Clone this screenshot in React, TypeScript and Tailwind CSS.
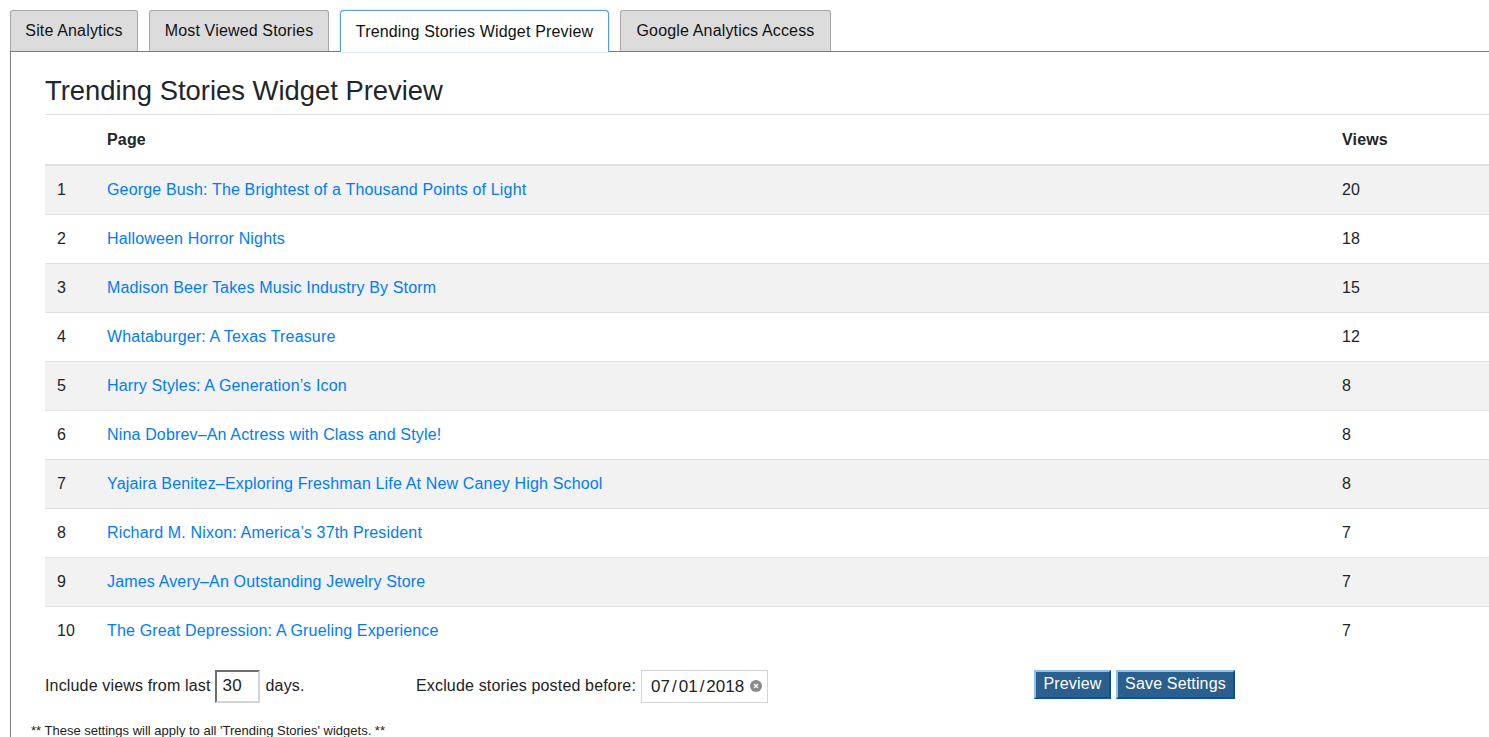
import React from "react";

const rows: [number, string, number][] = [
  [1, "George Bush: The Brightest of a Thousand Points of Light", 20],
  [2, "Halloween Horror Nights", 18],
  [3, "Madison Beer Takes Music Industry By Storm", 15],
  [4, "Whataburger: A Texas Treasure", 12],
  [5, "Harry Styles: A Generation\u2019s Icon", 8],
  [6, "Nina Dobrev\u2013An Actress with Class and Style!", 8],
  [7, "Yajaira Benitez\u2013Exploring Freshman Life At New Caney High School", 8],
  [8, "Richard M. Nixon: America\u2019s 37th President", 7],
  [9, "James Avery\u2013An Outstanding Jewelry Store", 7],
  [10, "The Great Depression: A Grueling Experience", 7],
];

function Tab({ label, active, w }: { label: string; active?: boolean; w: string }) {
  if (active) {
    return (
      <div className={`-mb-px h-[42px] ${w} flex items-center justify-center bg-white border border-b-0 border-[#5a9bd8] rounded-t-[4px] shadow-[0_0_2px_rgba(90,155,216,0.6)] text-[16px] text-[#111] whitespace-nowrap`}>
        {label}
      </div>
    );
  }
  return (
    <div className={`h-[41px] ${w} flex items-center justify-center bg-[#dcdcdc] border border-b-0 border-[#a6a6a6] rounded-t-[3px] text-[16px] text-[#111] whitespace-nowrap`}>
      {label}
    </div>
  );
}

export default function App() {
  return (
    <div className="font-['Liberation_Sans',Arial,sans-serif] tracking-[0.16px] text-[#212529] bg-white w-[1489px] h-[737px] overflow-hidden">
      <div className="pt-[10px] pl-[10px]">
        <div className="flex items-end gap-[11px] border-b border-[#7a7a7a]">
          <Tab label="Site Analytics" w="w-[128px]" />
          <Tab label="Most Viewed Stories" w="w-[180px]" />
          <Tab label="Trending Stories Widget Preview" active w="w-[269px]" />
          <Tab label="Google Analytics Access" w="w-[211px]" />
        </div>
        <div className="border-l border-[#7a7a7a] pl-[34px] pt-[23px]">
          <h3 className="text-[27.4px] tracking-normal leading-[1.2] font-normal mb-[6px] text-[#212529]">
            Trending Stories Widget Preview
          </h3>
          <table className="w-[1444px] border-collapse text-[16px] leading-[24px]">
            <colgroup>
              <col className="w-[50px]" />
              <col />
              <col className="w-[159px]" />
            </colgroup>
            <thead>
              <tr className="border-t border-[#dee2e6] border-b-2">
                <th className="pt-[13px] pb-[12px] px-[12px] text-left font-bold"></th>
                <th className="pt-[13px] pb-[12px] px-[12px] text-left font-bold">Page</th>
                <th className="pt-[13px] pb-[12px] px-[12px] text-left font-bold">Views</th>
              </tr>
            </thead>
            <tbody>
              {rows.map(([n, title, v]) => (
                <tr
                  key={n}
                  className={`border-t border-[#dee2e6] ${n % 2 === 1 ? "bg-[#f2f2f2]" : "bg-white"}`}
                >
                  <td className="p-[12px]">{n}</td>
                  <td className="p-[12px] text-[#007bff]">{title}</td>
                  <td className="p-[12px]">{v}</td>
                </tr>
              ))}
            </tbody>
          </table>
          <div className="flex items-center mt-[15px] text-[16px] text-[#222] whitespace-nowrap">
            <div className="w-[371px] flex items-center">
              <span>Include views from last</span>
              <div className="ml-[4px] w-[45px] h-[33px] border-2 border-t-[#6e6e6e] border-l-[#6e6e6e] border-r-[#d4d4d4] border-b-[#d4d4d4] flex items-end pb-[2px] pl-[6px] text-[17px]">
                30
              </div>
              <span className="ml-[6px]">days.</span>
            </div>
            <div className="w-[618px] flex items-center">
              <span>Exclude stories posted before:</span>
              <div className="ml-[5px] w-[127px] h-[33px] border border-[#d5d5d5] flex items-center pl-[9px] text-[17px] text-[#222] tracking-normal">
                <span>07</span>
                <span className="mx-[2px]">/</span>
                <span>01</span>
                <span className="mx-[2px]">/</span>
                <span>2018</span>
                <span className="ml-[6px] w-[12px] h-[12px] rounded-full bg-[#8a8a8a] flex items-center justify-center">
                  <svg width="6" height="6" viewBox="0 0 6 6">
                    <path d="M1 1L5 5M5 1L1 5" stroke="white" strokeWidth="1.4" />
                  </svg>
                </span>
              </div>
            </div>
            <div className="flex gap-[5px] self-start">
              <button className="h-[29px] w-[77px] bg-[#2a5f8e] text-white text-[16px] border-2 border-t-[#8cc0f0] border-l-[#8cc0f0] border-r-[#0a4fa0] border-b-[#0a4fa0]">
                Preview
              </button>
              <button className="h-[29px] w-[119px] bg-[#2a5f8e] text-white text-[16px] border-2 border-t-[#8cc0f0] border-l-[#8cc0f0] border-r-[#0a4fa0] border-b-[#0a4fa0]">
                Save Settings
              </button>
            </div>
          </div>
          <div className="-ml-[14px] mt-[18px] text-[13px] tracking-normal text-[#222]">
            ** These settings will apply to all 'Trending Stories' widgets. **
          </div>
        </div>
      </div>
    </div>
  );
}
